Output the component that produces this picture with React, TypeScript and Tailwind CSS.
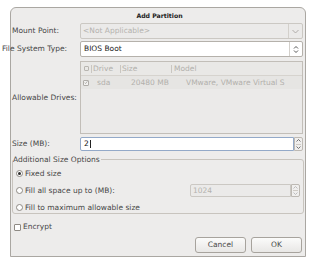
import React from 'react';

const font = { fontFamily: '"DejaVu Sans", "Liberation Sans", sans-serif' };

const ChevronDown = ({ color = '#8a8a8a' }: { color?: string }) => (
  <svg width="7" height="5" viewBox="0 0 7 5">
    <path d="M0.5 1 L3.5 4 L6.5 1" fill="none" stroke={color} strokeWidth="0.9" />
  </svg>
);

const UpDown = ({ color = '#555' }: { color?: string }) => (
  <svg width="6" height="9" viewBox="0 0 6 9">
    <path d="M1 3.5 L3 1.5 L5 3.5" fill="none" stroke={color} strokeWidth="0.9" />
    <path d="M1 5.5 L3 7.5 L5 5.5" fill="none" stroke={color} strokeWidth="0.9" />
  </svg>
);

const Spin = ({ disabled }: { disabled?: boolean }) => (
  <div className="w-[9px] flex flex-col border border-[#bdb9b3] rounded-r-[2px] bg-[#f0efee]">
    <div className="flex-1 flex items-center justify-center">
      <svg width="5" height="3" viewBox="0 0 5 3">
        <path d="M0.5 2.5 L2.5 0.5 L4.5 2.5" fill="none" stroke={disabled ? '#b0b0b0' : '#555'} strokeWidth="0.8" />
      </svg>
    </div>
    <div className="h-px bg-[#cfcbc5] mx-[1px]" />
    <div className="flex-1 flex items-center justify-center">
      <svg width="5" height="3" viewBox="0 0 5 3">
        <path d="M0.5 0.5 L2.5 2.5 L4.5 0.5" fill="none" stroke={disabled ? '#b0b0b0' : '#555'} strokeWidth="0.8" />
      </svg>
    </div>
  </div>
);

const Radio = ({ checked }: { checked?: boolean }) => (
  <div className="w-[7px] h-[7px] rounded-full border border-[#8e8a84] bg-white flex items-center justify-center">
    {checked && <div className="w-[3px] h-[3px] rounded-full bg-[#2e2e2e]" />}
  </div>
);

export default function App() {
  return (
    <div className="w-[320px] h-[260px] bg-white overflow-hidden text-[7.5px] text-[#474747]" style={font}>
      <div className="ml-[10px] mt-[7px] w-[296px] h-[250px] border border-[#aaa7a2] rounded-t-[6px] bg-[#edeceb] flex flex-col">
        {/* Title */}
        <div className="h-[15px] flex items-center justify-center pl-[3px] text-[6.2px] font-bold text-[#222]">
          Add Partition
        </div>

        <div className="flex flex-col pl-[1px] pr-[2px]">
          {/* Mount point */}
          <div className="flex items-center h-[16px]">
            <div className="w-[68px]">Mount Point:</div>
            <div className="flex-1 h-full flex border border-[#cbc8c3] rounded-[2px] bg-[#ebeae9]">
              <div className="flex-1 flex items-center pl-[2px] text-[#b4b2ae]">&lt;Not Applicable&gt;</div>
              <div className="w-[14px] border-l border-[#d3d0cb] flex items-center justify-center">
                <ChevronDown color="#a9a6a2" />
              </div>
            </div>
          </div>

          {/* File system type: label spills left past the frame, as in the shot */}
          <div className="flex items-center h-[16px] mt-[2px]">
            <div className="w-[68px] -ml-[10px] whitespace-nowrap">
              <span className="inline-block w-[78px]">File System Type:</span>
            </div>
            <div className="flex-1 h-full flex border border-[#b5b1ab] rounded-[2px] bg-white ml-[10px]">
              <div className="flex-1 flex items-center pl-[3px] text-[#222]">BIOS Boot</div>
              <div className="w-[13px] border-l border-[#d3d0cb] flex items-center justify-center">
                <UpDown color="#444" />
              </div>
            </div>
          </div>

          {/* Allowable drives */}
          <div className="flex items-center mt-[4px] h-[73px]">
            <div className="w-[68px]">Allowable Drives:</div>
            <div className="flex-1 h-full border border-[#c2beb8] bg-[#ebeae9] flex flex-col text-[#b2b0ac]">
              <div className="h-[14px] flex items-center border-b border-[#d6d3ce] bg-[#e9e8e6]">
                <div className="w-[10px] flex justify-center">
                  <div className="w-[5px] h-[5px] border border-[#b8b5b0] rounded-[1px]" />
                </div>
                <div className="w-px h-[8px] bg-[#c9c6c1]" />
                <div className="w-[28px] pl-[1px]">Drive</div>
                <div className="w-px h-[8px] bg-[#c9c6c1]" />
                <div className="w-[50px] pl-[1px]">Size</div>
                <div className="w-px h-[8px] bg-[#c9c6c1]" />
                <div className="flex-1 pl-[2px]">Model</div>
              </div>
              <div className="h-[13px] flex items-center bg-[#e6e5e3]">
                <div className="w-[10px] flex justify-center">
                  <div className="w-[6px] h-[6px] border border-[#b0ada8] rounded-[1px] bg-[#f3f2f1] flex items-center justify-center">
                    <svg width="5" height="5" viewBox="0 0 5 5">
                      <path d="M0.8 2.6 L2 3.8 L4.2 1" fill="none" stroke="#9a9893" strokeWidth="0.9" />
                    </svg>
                  </div>
                </div>
                <div className="w-[32px] pl-[6px]">sda</div>
                <div className="w-[51px] pl-[8px] whitespace-nowrap">20480 MB</div>
                <div className="flex-1 pl-[12px] whitespace-nowrap overflow-hidden">VMware, VMware Virtual S</div>
              </div>
            </div>
          </div>

          {/* Size */}
          <div className="flex items-center mt-[3px] h-[14px]">
            <div className="w-[68px]">Size (MB):</div>
            <div className="flex-1 h-full flex">
              <div className="flex-1 flex items-center pl-[3px] bg-white border border-[#93a9c8] rounded-l-[2px] text-[#111]">
                2<span className="w-px h-[8px] bg-[#222] ml-[1px]" />
              </div>
              <Spin />
            </div>
          </div>
        </div>

        {/* Additional size options */}
        <fieldset className="mt-[3px] ml-[1px] mr-[1px] h-[60px] border border-[#c8c4be] rounded-[3px] pl-[3px] pr-[3px]">
          <legend className="-ml-[3px] pr-[1px]">Additional Size Options</legend>
          <div className="flex flex-col">
            <div className="h-[17px] flex items-center gap-[2px]">
              <Radio checked />
              <span>Fixed size</span>
            </div>
            <div className="h-[17px] flex items-center gap-[2px]">
              <Radio />
              <span>Fill all space up to (MB):</span>
              <div className="ml-auto w-[110px] h-[13px] flex">
                <div className="flex-1 flex items-center pl-[2px] border border-[#cbc8c3] rounded-l-[2px] bg-[#ebeae9] text-[#b4b2ae]">1024</div>
                <Spin disabled />
              </div>
            </div>
            <div className="h-[17px] flex items-center gap-[2px]">
              <Radio />
              <span>Fill to maximum allowable size</span>
            </div>
          </div>
        </fieldset>

        {/* Encrypt */}
        <div className="h-[23px] flex items-center gap-[2px] pl-[3px] pt-[3px]">
          <div className="w-[7px] h-[7px] border border-[#8e8a84] bg-white rounded-[1px]" />
          <span>Encrypt</span>
        </div>

        {/* Buttons */}
        <div className="flex justify-end gap-[5px] pr-[3px]">
          <button className="w-[51px] h-[16px] border border-[#a7a39d] rounded-[3px] bg-gradient-to-b from-[#fbfbfa] to-[#e8e7e5] text-[#474747]">
            Cancel
          </button>
          <button className="w-[51px] h-[16px] border border-[#a7a39d] rounded-[3px] bg-gradient-to-b from-[#fbfbfa] to-[#e8e7e5] text-[#474747]">
            OK
          </button>
        </div>
      </div>
    </div>
  );
}
